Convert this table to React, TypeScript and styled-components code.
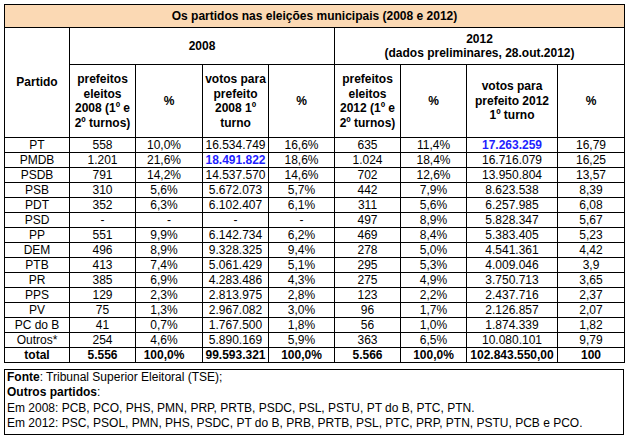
import React from "react";
import styled, { createGlobalStyle } from "styled-components";

const Global = createGlobalStyle`
  html, body { margin: 0; padding: 0; background: #fff; }
  body { font-family: "Liberation Sans", Arial, sans-serif; color: #000; }
`;

const Page = styled.div`
  padding: 4px;
  width: 620px;
`;

const Table = styled.table`
  border-collapse: collapse;
  table-layout: fixed;
  width: 620px;
  font-size: 12px;
`;

const TitleCell = styled.th`
  background: #fbd9b4;
  border: 1px solid #000;
  height: 22px;
  padding: 0;
  font-weight: bold;
  text-align: center;
  vertical-align: middle;
  line-height: 14px;
`;

const HeadCell = styled.th<{ $h?: number }>`
  border: 1px solid #000;
  padding: 0 2px;
  font-weight: bold;
  text-align: center;
  vertical-align: middle;
  line-height: 14.5px;
  height: ${(p) => (p.$h ? `${p.$h}px` : "auto")};
`;

const Cell = styled.td<{ $bold?: boolean; $blue?: boolean; $shift?: boolean }>`
  border: 1px solid #000;
  padding: ${(p) => (p.$shift ? "0 10px 0 0" : "0")};
  height: 14px;
  line-height: 14px;
  text-align: center;
  vertical-align: middle;
  white-space: nowrap;
  font-weight: ${(p) => (p.$bold || p.$blue ? "bold" : "normal")};
  color: ${(p) => (p.$blue ? "#1f1fff" : "#000")};
`;

const Footer = styled.div`
  margin-top: 6px;
  border: 1px solid #000;
  height: 64px;
  padding: 0 2px;
  font-size: 12px;
  line-height: 15.4px;
`;

const Line = styled.div``;

type Row = {
  p: string;
  a: string[];
  blue?: number;
  total?: boolean;
};

const rows: Row[] = [
  { p: "PT", a: ["558", "10,0%", "16.534.749", "16,6%", "635", "11,4%", "17.263.259", "16,79"], blue: 6 },
  { p: "PMDB", a: ["1.201", "21,6%", "18.491.822", "18,6%", "1.024", "18,4%", "16.716.079", "16,25"], blue: 2 },
  { p: "PSDB", a: ["791", "14,2%", "14.537.570", "14,6%", "702", "12,6%", "13.950.804", "13,57"] },
  { p: "PSB", a: ["310", "5,6%", "5.672.073", "5,7%", "442", "7,9%", "8.623.538", "8,39"] },
  { p: "PDT", a: ["352", "6,3%", "6.102.407", "6,1%", "311", "5,6%", "6.257.985", "6,08"] },
  { p: "PSD", a: ["-", "-", "-", "-", "497", "8,9%", "5.828.347", "5,67"] },
  { p: "PP", a: ["551", "9,9%", "6.142.734", "6,2%", "469", "8,4%", "5.383.405", "5,23"] },
  { p: "DEM", a: ["496", "8,9%", "9.328.325", "9,4%", "278", "5,0%", "4.541.361", "4,42"] },
  { p: "PTB", a: ["413", "7,4%", "5.061.429", "5,1%", "295", "5,3%", "4.009.046", "3,9"] },
  { p: "PR", a: ["385", "6,9%", "4.283.486", "4,3%", "275", "4,9%", "3.750.713", "3,65"] },
  { p: "PPS", a: ["129", "2,3%", "2.813.975", "2,8%", "123", "2,2%", "2.437.716", "2,37"] },
  { p: "PV", a: ["75", "1,3%", "2.967.082", "3,0%", "96", "1,7%", "2.126.857", "2,07"] },
  { p: "PC do B", a: ["41", "0,7%", "1.767.500", "1,8%", "56", "1,0%", "1.874.339", "1,82"] },
  { p: "Outros*", a: ["254", "4,6%", "5.890.169", "5,9%", "363", "6,5%", "10.080.101", "9,79"] },
  { p: "total", a: ["5.556", "100,0%", "99.593.321", "100,0%", "5.566", "100,0%", "102.843.550,00", "100"], total: true },
];

const widths = [65, 66, 67, 66, 66, 66, 66, 91, 67];

export default function App() {
  return (
    <>
      <Global />
      <Page>
        <Table>
          <colgroup>
            {widths.map((w, i) => (
              <col key={i} style={{ width: w }} />
            ))}
          </colgroup>
          <thead>
            <tr>
              <TitleCell colSpan={9}>Os partidos nas eleições municipais (2008 e 2012)</TitleCell>
            </tr>
            <tr>
              <HeadCell rowSpan={2}>Partido</HeadCell>
              <HeadCell colSpan={4} $h={36}>2008</HeadCell>
              <HeadCell colSpan={4}>
                2012
                <br />
                (dados preliminares, 28.out.2012)
              </HeadCell>
            </tr>
            <tr>
              <HeadCell $h={72}>prefeitos eleitos 2008 (1º e 2º turnos)</HeadCell>
              <HeadCell>%</HeadCell>
              <HeadCell>votos para prefeito 2008 1º turno</HeadCell>
              <HeadCell>%</HeadCell>
              <HeadCell>prefeitos eleitos 2012 (1º e 2º turnos)</HeadCell>
              <HeadCell>%</HeadCell>
              <HeadCell>
                votos para
                <br />
                prefeito 2012
                <br />
                1º turno
              </HeadCell>
              <HeadCell>%</HeadCell>
            </tr>
          </thead>
          <tbody>
            {rows.map((r) => (
              <tr key={r.p}>
                <Cell $bold={r.total}>{r.p}</Cell>
                {r.a.map((v, i) => (
                  <Cell key={i} $bold={r.total} $blue={r.blue === i} $shift={i === 1 && v !== "-"}>
                    {v}
                  </Cell>
                ))}
              </tr>
            ))}
          </tbody>
        </Table>
        <Footer>
          <Line>
            <b>Fonte</b>: Tribunal Superior Eleitoral (TSE);
          </Line>
          <Line>
            <b>Outros partidos</b>:
          </Line>
          <Line>Em 2008: PCB, PCO, PHS, PMN, PRP, PRTB, PSDC, PSL, PSTU, PT do B, PTC, PTN.</Line>
          <Line>Em 2012: PSC, PSOL, PMN, PHS, PSDC, PT do B, PRB, PRTB, PSL, PTC, PRP, PTN, PSTU, PCB e PCO.</Line>
        </Footer>
      </Page>
    </>
  );
}
